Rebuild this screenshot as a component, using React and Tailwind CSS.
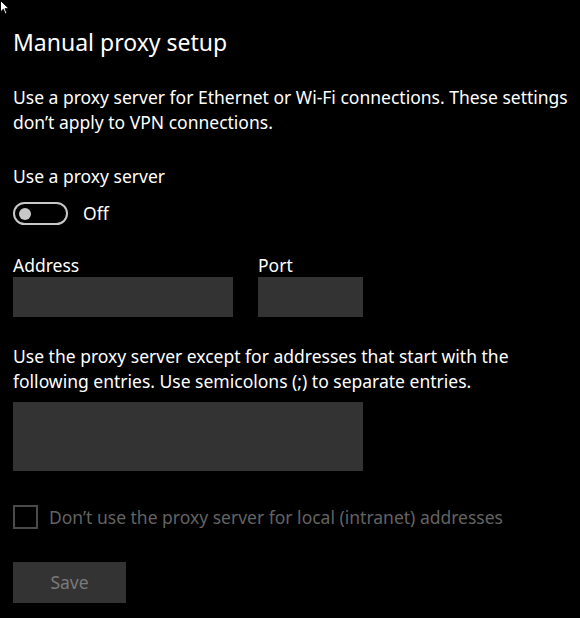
import React from "react";

const Cursor = () => (
  <svg className="absolute left-0 top-0" width="11" height="16" viewBox="0 0 11 16">
    <path d="M0.5 0.5 L0.5 12 L3.3 9.3 L5.3 14 L7 13.2 L5 8.7 L9 8.7 Z" fill="#fff" stroke="#000" strokeWidth="1" />
  </svg>
);

const App = () => {
  return (
    <div
      className="relative w-[580px] h-[618px] bg-black text-white overflow-hidden"
      style={{ fontFamily: '"Noto Sans", "Open Sans", sans-serif' }}
    >
      <Cursor />
      <div className="pl-[13px] pt-[25px]">
        <h1 className="text-[23px] leading-[34px] font-normal">Manual proxy setup</h1>

        <p className="mt-[26px] text-[17.5px] leading-[25px] pr-2">
          Use a proxy server for Ethernet or Wi-Fi connections. These settings don’t apply to VPN connections.
        </p>

        <p className="mt-[29px] text-[17.5px] leading-[25px]">Use a proxy server</p>
        <div className="mt-[13px] flex items-center gap-[15px]">
          <div className="w-[55px] h-[23px] rounded-full border-2 border-[#c8c8c8] flex items-center pl-[4px]">
            <div className="w-[12px] h-[12px] rounded-full bg-[#c8c8c8]" />
          </div>
          <span className="text-[17.5px] leading-[23px]">Off</span>
        </div>

        <div className="mt-[28px] flex gap-[25px]">
          <div className="flex flex-col">
            <span className="text-[17.5px] leading-[25px] -mb-[1px]">Address</span>
            <div className="w-[220px] h-[40px] bg-[#333333]" />
          </div>
          <div className="flex flex-col">
            <span className="text-[17.5px] leading-[25px] -mb-[1px]">Port</span>
            <div className="w-[105px] h-[40px] bg-[#333333]" />
          </div>
        </div>

        <p className="mt-[27px] text-[17.5px] leading-[25px] pr-2">
          Use the proxy server except for addresses that start with the following entries. Use semicolons (;) to separate entries.
        </p>
        <div className="mt-[8px] w-[350px] h-[69px] bg-[#333333]" />

        <div className="mt-[34px] flex items-center gap-[11px]">
          <div className="w-[25px] h-[24px] border-2 border-[#4a4a4a]" />
          <span className="text-[17.5px] leading-[24px] text-[#636363]">
            Don’t use the proxy server for local (intranet) addresses
          </span>
        </div>

        <button className="mt-[33px] w-[113px] h-[41px] bg-[#333333] text-[#7a7a7a] text-[17.5px]">Save</button>
      </div>
    </div>
  );
};

export default App;
